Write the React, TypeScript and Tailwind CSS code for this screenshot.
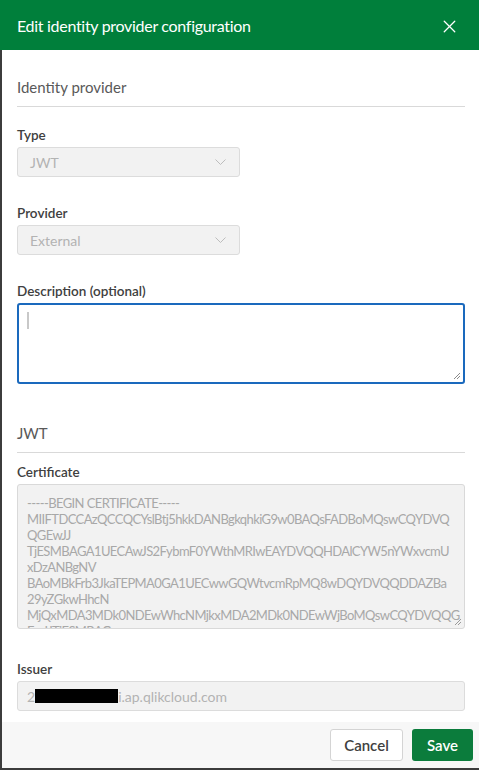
import { X } from "lucide-react";

const certLines = [
  "-----BEGIN CERTIFICATE-----",
  "MIIFTDCCAzQCCQCYslBtj5hkkDANBgkqhkiG9w0BAQsFADBoMQswCQYDVQ",
  "QGEwJJ",
  "TjESMBAGA1UECAwJS2FybmF0YWthMRIwEAYDVQQHDAlCYW5nYWxvcmU",
  "xDzANBgNV",
  "BAoMBkFrb3JkaTEPMA0GA1UECwwGQWtvcmRpMQ8wDQYDVQQDDAZBa",
  "29yZGkwHhcN",
  "MjQxMDA3MDk0NDEwWhcNMjkxMDA2MDk0NDEwWjBoMQswCQYDVQQG",
  "EwJJTjESMBAG",
];

function ResizeGrip({ color }: { color: string }) {
  return (
    <svg width="8" height="8" viewBox="0 0 8 8" className="absolute bottom-[2px] right-[2px]">
      <path d="M7 1L1 7M7 4L4 7" stroke={color} strokeWidth="1" />
    </svg>
  );
}

function SelectBox({ value }: { value: string }) {
  return (
    <div className="flex h-[30px] w-[223px] items-center justify-between rounded-[3px] border border-[#dcdcdc] bg-[#f2f2f2] pl-[12px] pr-[13px]">
      <span className="text-[14px] text-[#b3b3b3]">{value}</span>
      <svg width="11" height="6" viewBox="0 0 11 6" fill="none">
        <path d="M0.5 0.5L5.5 5.5L10.5 0.5" stroke="#bdbdbd" strokeWidth="1" />
      </svg>
    </div>
  );
}

function Label({ children, className = "" }: { children: string; className?: string }) {
  return (
    <div className={`text-[13.5px] font-semibold leading-[18px] text-[#404040] ${className}`}>
      {children}
    </div>
  );
}

export default function App() {
  return (
    <div className="flex h-[770px] w-[479px] flex-col overflow-hidden bg-white font-['Lato',sans-serif]">
      <header className="flex h-[50px] shrink-0 items-center justify-between bg-[#007f3b] pl-[17px] pr-[19px] pt-[2px]">
        <span className="text-[16px] tracking-[-0.3px] text-white">Edit identity provider configuration</span>
        <X className="h-[21px] w-[21px] text-white" strokeWidth={1.5} />
      </header>

      <div className="flex flex-1 flex-col border-b-2 border-l-2 border-[#3c3c3c]">
        <div className="flex-1 pl-[15px] pr-[14px]">
          <div className="mt-[27px] text-[15px] leading-[20px] text-[#595959]">Identity provider</div>
          <div className="mt-[9px] h-px bg-[#d9d9d9]" />

          <Label className="mt-[19px]">Type</Label>
          <div className="mt-[3px]">
            <SelectBox value="JWT" />
          </div>

          <Label className="mt-[27px]">Provider</Label>
          <div className="mt-[3px]">
            <SelectBox value="External" />
          </div>

          <Label className="mt-[27px]">Description (optional)</Label>
          <div className="relative mt-[3px] h-[81px] rounded-[3px] border-2 border-[#1a69bd] bg-white">
            <div className="ml-[8px] mt-[7px] h-[17px] w-[2px] bg-[#c8c8c8]" />
            <ResizeGrip color="#8a8a8a" />
          </div>

          <div className="mt-[39px] text-[15px] leading-[20px] text-[#595959]">JWT</div>
          <div className="mt-[9px] h-px bg-[#d9d9d9]" />

          <Label className="mt-[10px]">Certificate</Label>
          <div className="relative mt-[3px] h-[145px] overflow-hidden rounded-[3px] border border-[#d9d9d9] bg-[#f2f2f2] pl-[9px] pt-[10px]">
            {certLines.map((line, i) => (
              <div key={i} className="whitespace-pre text-[13px] leading-[16px] tracking-[-0.6px] text-[#a8a8a8]">
                {line}
              </div>
            ))}
            <ResizeGrip color="#9a9a9a" />
          </div>

          <Label className="mt-[31px]">Issuer</Label>
          <div className="mt-[3px] flex h-[30px] items-center rounded-[3px] border border-[#dcdcdc] bg-[#f2f2f2] pl-[9px]">
            <span className="text-[14px] text-[#b3b3b3]">2</span>
            <span className="h-[14px] w-[83px] bg-black" />
            <span className="text-[14px] text-[#b3b3b3]">i.ap.qlikcloud.com</span>
          </div>
        </div>

        <footer className="flex h-[46px] shrink-0 items-center justify-end gap-[9px] bg-[#f7f7f7] pr-[6px]">
          <button
            type="button"
            className="h-[32px] w-[73px] rounded-[3px] border border-[#d4d4d4] bg-white text-[15px] font-semibold text-[#404040]"
          >
            Cancel
          </button>
          <button
            type="button"
            className="h-[32px] w-[61px] rounded-[3px] bg-[#0b7c3c] text-[15px] font-semibold text-white"
          >
            Save
          </button>
        </footer>
      </div>
    </div>
  );
}
